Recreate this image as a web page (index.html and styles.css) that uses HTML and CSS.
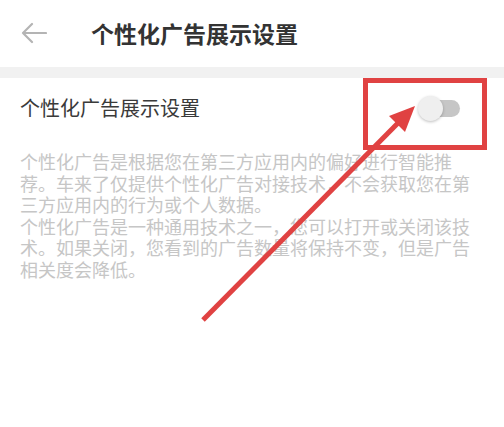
FILE: index.html
```html
<!DOCTYPE html>
<html lang="zh">
<head>
<meta charset="utf-8">
<link rel="stylesheet" href="styles.css">
</head>
<body>
<div class="page">
  <header class="header">
    <svg class="back" width="26" height="22" viewBox="0 0 26 22">
      <path d="M25 11 H2 M11 2 L2 11 L11 20" fill="none" stroke="#b4b4b4" stroke-width="2.2" stroke-linecap="round" stroke-linejoin="round"/>
    </svg>
    <h1 class="title">个性化广告展示设置</h1>
  </header>
  <div class="band"></div>
  <div class="row">
    <span class="row-title">个性化广告展示设置</span>
    <span class="switch"><span class="track"></span><span class="thumb"></span></span>
  </div>
  <div class="desc">
    <p>个性化广告是根据您在第三方应用内的偏好进行智能推荐。车来了仅提供个性化广告对接技术，不会获取您在第三方应用内的行为或个人数据。</p>
    <p>个性化广告是一种通用技术之一，您可以打开或关闭该技术。如果关闭，您看到的广告数量将保持不变，但是广告相关度会降低。</p>
  </div>
  <div class="mark-box"></div>
  <svg class="mark-arrow" width="504" height="427" viewBox="0 0 504 427">
    <line x1="203" y1="320" x2="400" y2="121" stroke="#e04242" stroke-width="5"/>
    <polygon points="415,106 405,132 389,116" fill="#e04242"/>
  </svg>
</div>
</body>
</html>
```
FILE: styles.css
```css
html, body {
  margin: 0;
  padding: 0;
  background: #ffffff;
}
body {
  font-family: "Noto Sans CJK SC", "Noto Sans", sans-serif;
}
.page {
  position: relative;
  width: 504px;
  height: 427px;
  overflow: hidden;
}
.header {
  height: 67px;
  display: flex;
  align-items: center;
  padding-left: 21px;
}
.back {
  display: block;
  margin-top: -2px;
}
.title {
  margin: 0 0 0 44px;
  font-size: 23px;
  font-weight: 700;
  color: #333333;
  line-height: 30px;
  margin-top: -2px;
}
.band {
  height: 11px;
  background: #f1f1f1;
}
.row {
  height: 60px;
  display: flex;
  align-items: center;
  justify-content: space-between;
  padding: 0 44px 0 20px;
}
.row-title {
  font-size: 20px;
  color: #3a3a3a;
  line-height: 26px;
}
.switch {
  position: relative;
  width: 42px;
  height: 25px;
  display: block;
}
.track {
  position: absolute;
  right: 0;
  top: 4px;
  width: 36px;
  height: 17px;
  border-radius: 9px;
  background: #c6c6c6;
}
.thumb {
  position: absolute;
  left: 0;
  top: 0;
  width: 25px;
  height: 25px;
  border-radius: 50%;
  background: #efefef;
  box-shadow: 0 1px 3px rgba(0,0,0,0.25);
}
.desc {
  padding: 13px 0 0 20px;
  width: 462px;
  font-size: 18px;
  line-height: 21.6px;
  color: #c6c6c6;
}
.desc p {
  margin: 0;
}
.mark-box {
  position: absolute;
  left: 363px;
  top: 78px;
  width: 114px;
  height: 62px;
  border: 5px solid #e04242;
}
.mark-arrow {
  position: absolute;
  left: 0;
  top: 0;
}
```
